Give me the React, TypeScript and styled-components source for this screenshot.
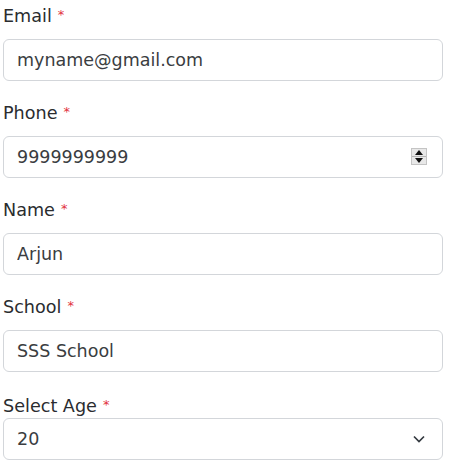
import React from "react";
import styled, { createGlobalStyle } from "styled-components";

const GlobalStyle = createGlobalStyle`
  * { box-sizing: border-box; }
  body {
    margin: 0;
    background: #ffffff;
    font-family: "DejaVu Sans", "Noto Sans", sans-serif;
  }
`;

const Form = styled.form`
  width: 451px;
  padding: 4px 8px 0 3px;
`;

const Group = styled.div`
  margin-bottom: 20px;
`;

const Label = styled.label<{ $tight?: boolean }>`
  display: block;
  font-size: 17.6px;
  line-height: 24px;
  color: #2a2c2f;
  padding-top: ${(p) => (p.$tight ? "2px" : "0")};
  margin-bottom: ${(p) => (p.$tight ? "0" : "11px")};
`;

const Required = styled.span`
  color: #e2323d;
  font-size: 13px;
  line-height: 1;
  margin-left: 6px;
  vertical-align: 3px;
`;

const FieldBox = styled.div`
  position: relative;
  width: 440px;
`;

const TextInput = styled.input`
  display: block;
  width: 100%;
  height: 42px;
  padding: 0 13px;
  border: 1px solid #d3d6da;
  border-radius: 6px;
  background: #ffffff;
  font-family: inherit;
  font-size: 17.5px;
  color: #3a3d41;
  outline: none;
`;

const Select = styled.select`
  display: block;
  width: 100%;
  height: 42px;
  padding: 0 13px;
  border: 1px solid #d3d6da;
  border-radius: 6px;
  background: #ffffff;
  font-family: inherit;
  font-size: 17.5px;
  color: #3a3d41;
  outline: none;
  appearance: none;
  -webkit-appearance: none;
`;

const Spinner = styled.div`
  position: absolute;
  top: 12px;
  right: 16px;
  width: 16px;
  height: 17px;
  display: flex;
  flex-direction: column;
  background: #e8e8e8;
  border: 1px solid #c4c4c4;
`;

const SpinHalf = styled.div<{ $down?: boolean }>`
  flex: 1;
  display: flex;
  align-items: center;
  justify-content: center;
  border-top: ${(p) => (p.$down ? "1px solid #b5b5b5" : "none")};
`;

const Chevron = styled.svg`
  position: absolute;
  right: 18px;
  top: 17px;
  pointer-events: none;
`;

type Field = { label: string; value: string; spinner?: boolean };

const fields: Field[] = [
  { label: "Email", value: "myname@gmail.com" },
  { label: "Phone", value: "9999999999", spinner: true },
  { label: "Name", value: "Arjun" },
  { label: "School", value: "SSS School" },
];

export default function App() {
  return (
    <>
      <GlobalStyle />
      <Form>
        {fields.map((f) => (
          <Group key={f.label}>
            <Label>
              {f.label}
              <Required>*</Required>
            </Label>
            <FieldBox>
              <TextInput
                type="text"
                inputMode={f.spinner ? "numeric" : undefined}
                defaultValue={f.value}
              />
              {f.spinner && (
                <Spinner>
                  <SpinHalf>
                    <svg width="8" height="5" viewBox="0 0 8 5">
                      <path d="M0 5 L4 0 L8 5 Z" fill="#111" />
                    </svg>
                  </SpinHalf>
                  <SpinHalf $down>
                    <svg width="8" height="5" viewBox="0 0 8 5">
                      <path d="M0 0 L8 0 L4 5 Z" fill="#111" />
                    </svg>
                  </SpinHalf>
                </Spinner>
              )}
            </FieldBox>
          </Group>
        ))}
        <Group>
          <Label $tight>
            Select Age<Required>*</Required>
          </Label>
          <FieldBox>
            <Select defaultValue="20">
              <option value="18">18</option>
              <option value="19">19</option>
              <option value="20">20</option>
              <option value="21">21</option>
            </Select>
            <Chevron width="12" height="8" viewBox="0 0 12 8">
              <path d="M1 1.5 L6 6.5 L11 1.5" fill="none" stroke="#343a40" strokeWidth="1.7" />
            </Chevron>
          </FieldBox>
        </Group>
      </Form>
    </>
  );
}
